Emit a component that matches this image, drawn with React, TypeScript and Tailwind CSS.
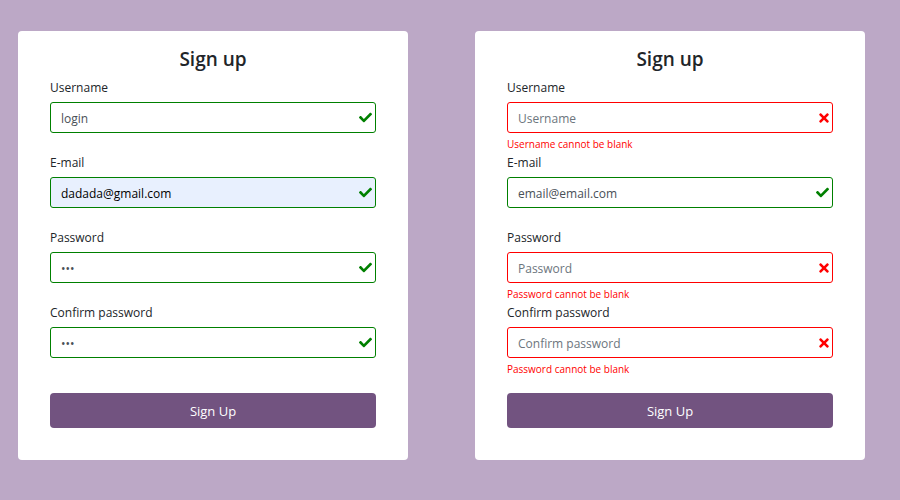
import React, { useState } from "react";
import { FaCheck, FaTimes } from "react-icons/fa";

type FieldProps = {
  id: string;
  label: string;
  type?: string;
  placeholder?: string;
  initial?: string;
  error?: string;
  autofilled?: boolean;
};

function Field({ id, label, type = "text", placeholder, initial = "", error, autofilled }: FieldProps) {
  const [value, setValue] = useState(initial);
  const border = error ? "border-[#ff0000]" : "border-[#008000]";
  const fill = autofilled ? "bg-[#e8f0fe] text-black" : "bg-white text-[#495057]";
  return (
    <div className="flex flex-col">
      <label htmlFor={id} className="mb-[3px] text-xs leading-[22px]">
        {label}
      </label>
      <div className="relative">
        <input
          id={id}
          type={type}
          value={value}
          placeholder={placeholder}
          aria-invalid={Boolean(error)}
          onChange={(e) => setValue(e.target.value)}
          className={`block h-[31px] w-full rounded-[3px] border px-[10px] pt-[2px] text-xs outline-none placeholder:text-[#6c757d] ${border} ${fill}`}
        />
        <span className="pointer-events-none absolute inset-y-0 right-1 flex items-center">
          {error ? (
            <FaTimes className="h-[14px] w-[10px] text-[#ff0000]" />
          ) : (
            <FaCheck className="h-[13px] w-[13px] text-[#008000]" />
          )}
        </span>
      </div>
      <p className="h-[19px] pt-1 text-[10px] leading-[15px] text-[#ff0000]">{error}</p>
    </div>
  );
}

function SignUpCard({ fields }: { fields: FieldProps[] }) {
  return (
    <form
      noValidate
      onSubmit={(e) => e.preventDefault()}
      className="rounded bg-white px-8 pt-4 pb-8"
    >
      <h1 className="mb-[6px] text-center text-[19px] leading-6 font-semibold">Sign up</h1>
      {fields.map((field) => (
        <Field key={field.id} {...field} />
      ))}
      <button
        type="submit"
        className="mt-4 block h-[35px] w-full rounded bg-[#725380] pt-[2px] text-[13px] font-medium text-white"
      >
        Sign Up
      </button>
    </form>
  );
}

const filled: FieldProps[] = [
  { id: "a-username", label: "Username", initial: "login" },
  { id: "a-email", label: "E-mail", type: "email", initial: "dadada@gmail.com", autofilled: true },
  { id: "a-password", label: "Password", type: "password", initial: "123" },
  { id: "a-confirm", label: "Confirm password", type: "password", initial: "123" },
];

const blank: FieldProps[] = [
  { id: "b-username", label: "Username", placeholder: "Username", error: "Username cannot be blank" },
  { id: "b-email", label: "E-mail", type: "email", initial: "email@email.com" },
  { id: "b-password", label: "Password", type: "password", placeholder: "Password", error: "Password cannot be blank" },
  { id: "b-confirm", label: "Confirm password", type: "password", placeholder: "Confirm password", error: "Password cannot be blank" },
];

export default function App() {
  return (
    <main className="grid min-h-screen grid-cols-2 items-start gap-[67px] bg-[#bca8c6] pt-[31px] pr-[35px] pb-10 pl-[18px] font-['Open_Sans','Noto_Sans',sans-serif] text-[#212529]">
      <SignUpCard fields={filled} />
      <SignUpCard fields={blank} />
    </main>
  );
}
